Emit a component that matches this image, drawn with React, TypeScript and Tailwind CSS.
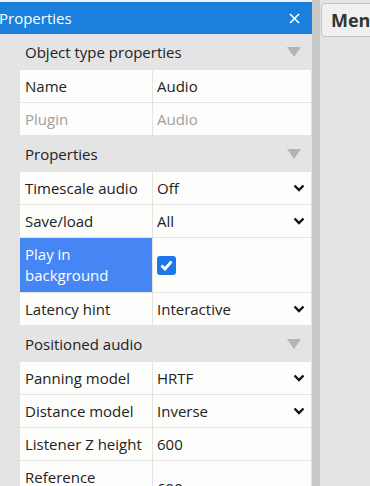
import React from "react";

type Row =
  | { kind: "header"; label: string }
  | {
      kind: "row";
      label: string;
      value?: string;
      select?: boolean;
      check?: boolean;
      muted?: boolean;
      active?: boolean;
      tall?: boolean;
    };

const ROWS: Row[] = [
  { kind: "header", label: "Object type properties" },
  { kind: "row", label: "Name", value: "Audio" },
  { kind: "row", label: "Plugin", value: "Audio", muted: true },
  { kind: "header", label: "Properties" },
  { kind: "row", label: "Timescale audio", value: "Off", select: true },
  { kind: "row", label: "Save/load", value: "All", select: true },
  { kind: "row", label: "Play in background", check: true, active: true, tall: true },
  { kind: "row", label: "Latency hint", value: "Interactive", select: true },
  { kind: "header", label: "Positioned audio" },
  { kind: "row", label: "Panning model", value: "HRTF", select: true },
  { kind: "row", label: "Distance model", value: "Inverse", select: true },
  { kind: "row", label: "Listener Z height", value: "600" },
  { kind: "row", label: "Reference distance", value: "600", tall: true },
];

function Chevron() {
  return (
    <svg width="12" height="8" viewBox="0 0 12 8" className="shrink-0">
      <path d="M1.5 1.5 L6 6 L10.5 1.5" fill="none" stroke="#111" strokeWidth="2.4" />
    </svg>
  );
}

function Triangle() {
  return (
    <svg width="14" height="10" viewBox="0 0 14 10" className="shrink-0">
      <path d="M0 0 H14 L7 10 Z" fill="#b4b4b4" />
    </svg>
  );
}

function Checkbox() {
  return (
    <div className="w-[19px] h-[19px] rounded-[3px] bg-[#1c78e8] flex items-center justify-center">
      <svg width="13" height="11" viewBox="0 0 13 11">
        <path d="M1.5 5.5 L5 9 L11.5 1.5" fill="none" stroke="#fff" strokeWidth="2.8" />
      </svg>
    </div>
  );
}

export default function App() {
  return (
    <div
      className="w-[370px] h-[486px] overflow-hidden flex bg-[#e4e4e4] text-[#222]"
      style={{ fontFamily: '"Open Sans", "Noto Sans", sans-serif' }}
    >
      {/* Properties panel */}
      <div className="w-[312px] shrink-0 flex flex-col">
        <div className="h-[2px] shrink-0 bg-[#f2f2f2]" />
        <div className="h-[32px] shrink-0 bg-[#1a80dc] flex items-center justify-between pr-[12px]">
          <span className="text-white text-[15px] -ml-[1px]">Properties</span>
          <svg width="11" height="11" viewBox="0 0 11 11">
            <path d="M1 1 L10 10 M10 1 L1 10" stroke="#fff" strokeWidth="1.6" />
          </svg>
        </div>
        <div className="shrink-0 pl-[20px] pr-[1px] text-[15px]">
          {ROWS.map((r, i) =>
            r.kind === "header" ? (
              <div key={i} className="h-[36px] flex items-center justify-between pl-[5px] pr-[10px]">
                <span>{r.label}</span>
                <Triangle />
              </div>
            ) : (
              <div
                key={i}
                className={`flex bg-[#fdfdfb] border-b border-[#e4e4e4] ${r.tall ? "h-[55px]" : "h-[33px]"}`}
              >
                <div
                  className={`w-[133px] shrink-0 border-r border-[#e4e4e4] flex items-center px-[5px] leading-[21px] ${
                    r.active ? "bg-[#4585f4] text-white" : r.muted ? "text-[#a0a0a0]" : ""
                  }`}
                >
                  {r.label}
                </div>
                <div
                  className={`flex-1 flex items-center justify-between pl-[4px] pr-[6px] ${
                    r.muted ? "text-[#a0a0a0]" : ""
                  }`}
                >
                  {r.check ? <Checkbox /> : <span>{r.value}</span>}
                  {r.select && <Chevron />}
                </div>
              </div>
            )
          )}
        </div>
      </div>
      {/* splitter */}
      <div className="w-[8px] shrink-0 bg-[#c8c8c8]" />
      {/* right area */}
      <div className="flex-1 pt-[3px] pl-[1px] overflow-hidden">
        <div className="h-[34px] w-[96px] rounded-[4px] border border-[#c4c4c4] bg-[#f0f0f0] flex items-center pl-[9px] text-[18px] font-bold text-[#333]">
          Menu
        </div>
      </div>
    </div>
  );
}
